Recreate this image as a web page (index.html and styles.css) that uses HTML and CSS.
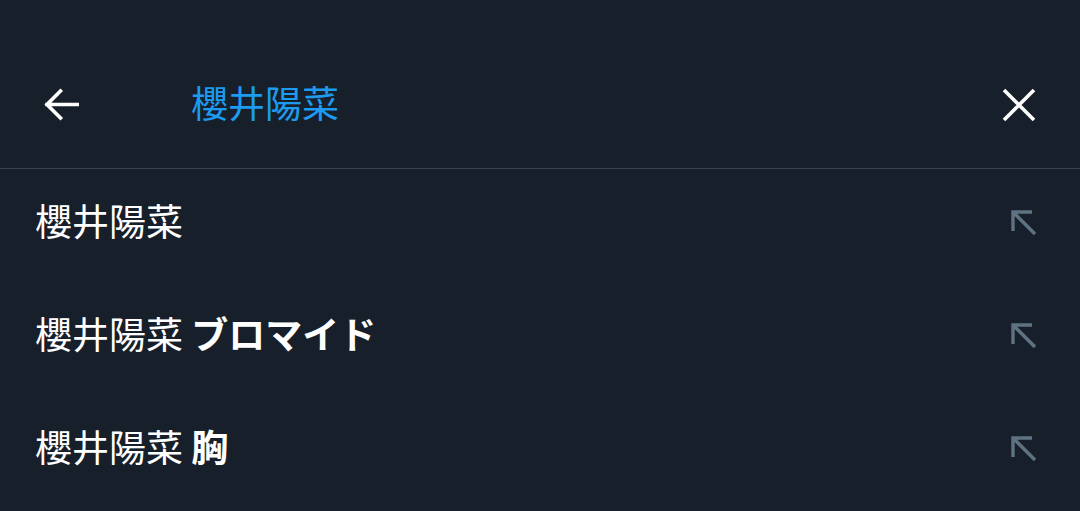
FILE: index.html
```html
<!DOCTYPE html>
<html lang="ja">
<head>
<meta charset="utf-8">
<link rel="stylesheet" href="styles.css">
</head>
<body>
<div class="screen">
  <header class="bar">
    <button class="icon-btn back" aria-label="戻る">
      <svg viewBox="0 0 36 36" width="36" height="36"><path d="M35 17.5H4M17.5 4L4 17.5 17.5 31" stroke="#fff" stroke-width="3.6" fill="none" stroke-linecap="square"/></svg>
    </button>
    <div class="query">櫻井陽菜</div>
    <button class="icon-btn close" aria-label="クリア">
      <svg viewBox="0 0 34 34" width="34" height="34"><path d="M2 2L32 32M32 2L2 32" stroke="#fff" stroke-width="3.6" fill="none"/></svg>
    </button>
  </header>
  <ul class="list">
    <li class="row"><span class="term">櫻井陽菜</span><svg class="fill-icon" viewBox="0 0 26 26" width="26" height="26"><path d="M2 21V2H21M2 2L24 24" stroke="#5f7282" stroke-width="3.4" fill="none"/></svg></li>
    <li class="row"><span class="term">櫻井陽菜 <b>ブロマイド</b></span><svg class="fill-icon" viewBox="0 0 26 26" width="26" height="26"><path d="M2 21V2H21M2 2L24 24" stroke="#5f7282" stroke-width="3.4" fill="none"/></svg></li>
    <li class="row"><span class="term">櫻井陽菜 <b>胸</b></span><svg class="fill-icon" viewBox="0 0 26 26" width="26" height="26"><path d="M2 21V2H21M2 2L24 24" stroke="#5f7282" stroke-width="3.4" fill="none"/></svg></li>
  </ul>
</div>
</body>
</html>
```

FILE: styles.css
```css
html, body {
  margin: 0;
  padding: 0;
  background: #17202a;
}
body {
  font-family: "Noto Sans CJK JP", "Noto Sans", sans-serif;
  color: #fff;
  width: 1080px;
  height: 511px;
  overflow: hidden;
}
.screen {
  padding-top: 42px;
}
.bar {
  display: flex;
  align-items: center;
  border-bottom: 1px solid #38444d;
  box-sizing: border-box;
  height: 127px;
  padding-bottom: 1px;
}
.icon-btn {
  background: none;
  border: 0;
  padding: 0;
  display: flex;
}
.back {
  margin-left: 43px;
}
.query {
  margin-left: 112px;
  font-size: 37px;
  line-height: 1;
  color: #1d9bf0;
  flex: 1;
  position: relative;
  top: -2px;
}
.close {
  margin-right: 44px;
}
.list {
  list-style: none;
  margin: 0;
  padding: 0;
}
.row {
  height: 113px;
  display: flex;
  align-items: center;
  justify-content: space-between;
  padding: 0 43px 0 35px;
}
.term {
  font-size: 37px;
  line-height: 1;
  position: relative;
  top: -5px;
}
.term b {
  font-weight: 700;
}
.fill-icon {
  margin-top: -6px;
}
```
